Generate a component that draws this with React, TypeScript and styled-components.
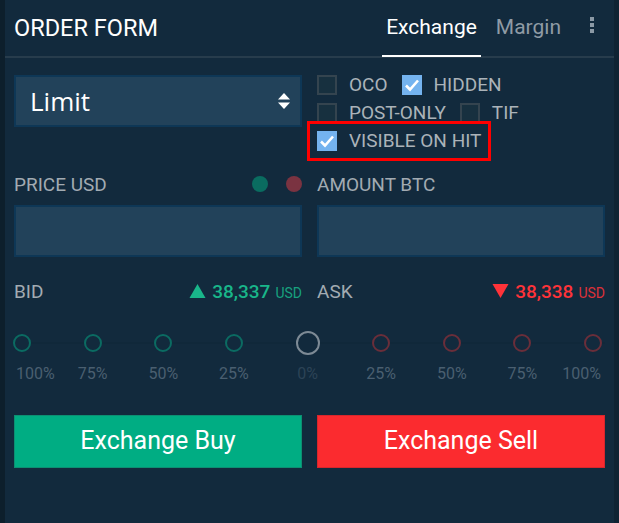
import React from 'react'
import styled, { createGlobalStyle } from 'styled-components'

const GlobalStyle = createGlobalStyle`
  html, body {
    margin: 0;
    padding: 0;
    background: #122a3d;
  }
  body {
    font-family: Roboto, 'Liberation Sans', sans-serif;
  }
`

const Panel = styled.div`
  width: 619px;
  height: 523px;
  box-sizing: border-box;
  background: #122a3d;
  border-left: 5px solid #0d1f2c;
  border-right: 5px solid #0f2333;
  overflow: hidden;
`

const Header = styled.div`
  height: 56px;
  display: flex;
  align-items: stretch;
  padding: 0 0 0 9px;
  border-bottom: 2px solid #273c4c;
`

const Title = styled.div`
  flex: 1;
  display: flex;
  align-items: center;
  color: #ffffff;
  font-size: 23.5px;
  padding-bottom: 1px;
`

const Tab = styled.div<{ active?: boolean }>`
  display: flex;
  align-items: center;
  padding: 0 4px 2px;
  margin-left: 11px;
  font-size: 21px;
  color: ${(p) => (p.active ? '#ffffff' : '#8f9ba5')};
  border-bottom: 2px solid ${(p) => (p.active ? '#ffffff' : 'transparent')};
  margin-bottom: -1px;
`

const Kebab = styled.div`
  width: 44px;
  margin-left: 5px;
  display: flex;
  flex-direction: column;
  align-items: center;
  padding-top: 17px;
  gap: 2px;
  box-sizing: border-box;
  span {
    width: 4px;
    height: 4px;
    background: #8b99a5;
  }
`

const Body = styled.div`
  padding: 17px 9px 0;
`

const TwoCol = styled.div`
  display: grid;
  grid-template-columns: 288px 288px;
  column-gap: 15px;
`

const Select = styled.div`
  height: 52px;
  box-sizing: border-box;
  background: #22425a;
  border: 2px solid #0e3756;
  display: flex;
  align-items: center;
  justify-content: space-between;
  padding: 0 9px 0 14px;
  color: #ffffff;
  font-family: 'Open Sans', Roboto, sans-serif;
  font-size: 26px;
`

const Checks = styled.div`
  display: flex;
  flex-direction: column;
  gap: 8px;
`

const CheckRow = styled.div`
  display: flex;
  align-items: center;
  height: 20px;
  gap: 14px;
`

const CheckItem = styled.label<{ highlight?: boolean }>`
  display: flex;
  align-items: center;
  gap: 12px;
  color: #abb3b9;
  font-size: 19px;
  line-height: 20px;
  ${(p) =>
    p.highlight &&
    `
    outline: 3px solid #ff0000;
    outline-offset: 7px;
  `}
`

const Box = styled.span<{ checked?: boolean }>`
  width: 20px;
  height: 20px;
  box-sizing: border-box;
  display: flex;
  align-items: center;
  justify-content: center;
  background: ${(p) => (p.checked ? '#74b3ef' : '#17303f')};
  border: 2px solid ${(p) => (p.checked ? '#74b3ef' : '#34444f')};
`

const FieldHead = styled.div`
  display: flex;
  align-items: center;
  justify-content: space-between;
  height: 24px;
  margin-top: 21px;
  color: #a2abb2;
  font-size: 19px;
`

const Dots = styled.div`
  display: flex;
  gap: 18px;
`

const Dot = styled.span<{ color: string }>`
  width: 16px;
  height: 16px;
  border-radius: 50%;
  background: ${(p) => p.color};
`

const Input = styled.div`
  height: 52px;
  margin-top: 9px;
  box-sizing: border-box;
  background: #22425a;
  border: 2px solid #0e3756;
`

const QuoteRow = styled.div`
  display: flex;
  align-items: center;
  justify-content: space-between;
  height: 24px;
  margin-top: 22px;
  color: #a2abb2;
  font-size: 19px;
`

const Quote = styled.div<{ color: string }>`
  display: flex;
  align-items: baseline;
  color: ${(p) => p.color};
  font-size: 19px;
  font-weight: 500;
  svg {
    align-self: center;
    margin-right: 6px;
  }
  small {
    font-size: 14px;
    font-weight: 400;
    margin-left: 5px;
    opacity: 0.85;
  }
`

const Slider = styled.div`
  margin-top: 24px;
  position: relative;
  padding-right: 3px;
  margin-left: -1px;
  display: flex;
  justify-content: space-between;
  &::before {
    content: '';
    position: absolute;
    left: 0;
    right: 0;
    top: 15px;
    height: 2px;
    background: #10283a;
  }
`

const Stop = styled.div<{ edge?: 'start' | 'end'; big?: boolean }>`
  position: relative;
  width: ${(p) => (p.big ? 24 : 18)}px;
  display: flex;
  flex-direction: column;
  align-items: ${(p) =>
    p.edge === 'start' ? 'flex-start' : p.edge === 'end' ? 'flex-end' : 'center'};
  height: 62px;
`

const Ring = styled.span<{ color: string; big?: boolean }>`
  flex: none;
  width: ${(p) => (p.big ? 24 : 18)}px;
  height: ${(p) => (p.big ? 24 : 18)}px;
  margin-top: ${(p) => (p.big ? 4 : 7)}px;
  box-sizing: border-box;
  border-radius: 50%;
  border: 2px solid ${(p) => p.color};
  background: #122a3d;
`

const StopLabel = styled.span<{ dim?: boolean; edge?: 'start' | 'end' }>`
  margin-top: ${(p) => (p.dim ? 9 : 12)}px;
  white-space: nowrap;
  font-size: 16px;
  color: ${(p) => (p.dim ? '#2c4356' : '#4a5f70')};
  padding-left: ${(p) => (p.edge === 'start' ? 3 : 0)}px;
  padding-right: ${(p) => (p.edge === 'end' ? 1 : 0)}px;
`

const Actions = styled(TwoCol)`
  margin-top: 26px;
`

const Button = styled.button<{ tone: 'buy' | 'sell' }>`
  height: 53px;
  border: 1px solid ${(p) => (p.tone === 'buy' ? '#0d8f72' : '#d8262c')};
  background: ${(p) => (p.tone === 'buy' ? '#00ad83' : '#fb2b2f')};
  color: #ffffff;
  font-family: Roboto, sans-serif;
  font-size: 25px;
  padding: 0 0 2px;
`

const Check = () => (
  <svg width='16' height='14' viewBox='0 0 16 14'>
    <path d='M2 7.5 L6 11.5 L14 2.5' fill='none' stroke='#ffffff' strokeWidth='2.6' />
  </svg>
)

const UpDown = () => (
  <svg width='14' height='18' viewBox='0 0 14 18'>
    <path d='M7 1 L13 7.5 H1 Z' fill='#ffffff' />
    <path d='M7 17 L13 10.5 H1 Z' fill='#ffffff' />
  </svg>
)

const Tri = ({ up, color }: { up?: boolean; color: string }) => (
  <svg width='17' height='16' viewBox='0 0 17 16'>
    <path d={up ? 'M8.5 1 L16.5 15 H0.5 Z' : 'M0.5 1 H16.5 L8.5 15 Z'} fill={color} />
  </svg>
)

const stops = [
  { label: '100%', color: '#0b6b62' },
  { label: '75%', color: '#0b6b62' },
  { label: '50%', color: '#0b6b62' },
  { label: '25%', color: '#0b6b62' },
  { label: '0%', color: '#7d8a95', big: true },
  { label: '25%', color: '#6a2e3a' },
  { label: '50%', color: '#6a2e3a' },
  { label: '75%', color: '#6a2e3a' },
  { label: '100%', color: '#6a2e3a' },
]

const App = () => {
  return (
    <>
      <GlobalStyle />
      <Panel>
        <Header>
          <Title>ORDER FORM</Title>
          <Tab active>Exchange</Tab>
          <Tab>Margin</Tab>
          <Kebab>
            <span />
            <span />
            <span />
          </Kebab>
        </Header>
        <Body>
          <TwoCol>
            <Select>
              Limit
              <UpDown />
            </Select>
            <Checks>
              <CheckRow>
                <CheckItem>
                  <Box />
                  OCO
                </CheckItem>
                <CheckItem>
                  <Box checked>
                    <Check />
                  </Box>
                  HIDDEN
                </CheckItem>
              </CheckRow>
              <CheckRow>
                <CheckItem>
                  <Box />
                  POST-ONLY
                </CheckItem>
                <CheckItem>
                  <Box />
                  TIF
                </CheckItem>
              </CheckRow>
              <CheckRow>
                <CheckItem highlight>
                  <Box checked>
                    <Check />
                  </Box>
                  VISIBLE ON HIT
                </CheckItem>
              </CheckRow>
            </Checks>
          </TwoCol>

          <TwoCol>
            <div>
              <FieldHead>
                PRICE USD
                <Dots>
                  <Dot color='#0a6c60' />
                  <Dot color='#7a3341' />
                </Dots>
              </FieldHead>
              <Input />
            </div>
            <div>
              <FieldHead>AMOUNT BTC</FieldHead>
              <Input />
            </div>
          </TwoCol>

          <TwoCol>
            <QuoteRow>
              BID
              <Quote color='#19b68a'>
                <Tri up color='#19b68a' />
                38,337<small>USD</small>
              </Quote>
            </QuoteRow>
            <QuoteRow>
              ASK
              <Quote color='#ff3339'>
                <Tri color='#ff3339' />
                38,338<small>USD</small>
              </Quote>
            </QuoteRow>
          </TwoCol>

          <Slider>
            {stops.map((s, i) => {
              const edge = i === 0 ? 'start' : i === stops.length - 1 ? 'end' : undefined
              return (
                <Stop key={`stop:${i}`} edge={edge} big={s.big}>
                  <Ring color={s.color} big={s.big} />
                  <StopLabel dim={s.big} edge={edge}>
                    {s.label}
                  </StopLabel>
                </Stop>
              )
            })}
          </Slider>

          <Actions>
            <Button tone='buy'>Exchange Buy</Button>
            <Button tone='sell'>Exchange Sell</Button>
          </Actions>
        </Body>
      </Panel>
    </>
  )
}

export default App
